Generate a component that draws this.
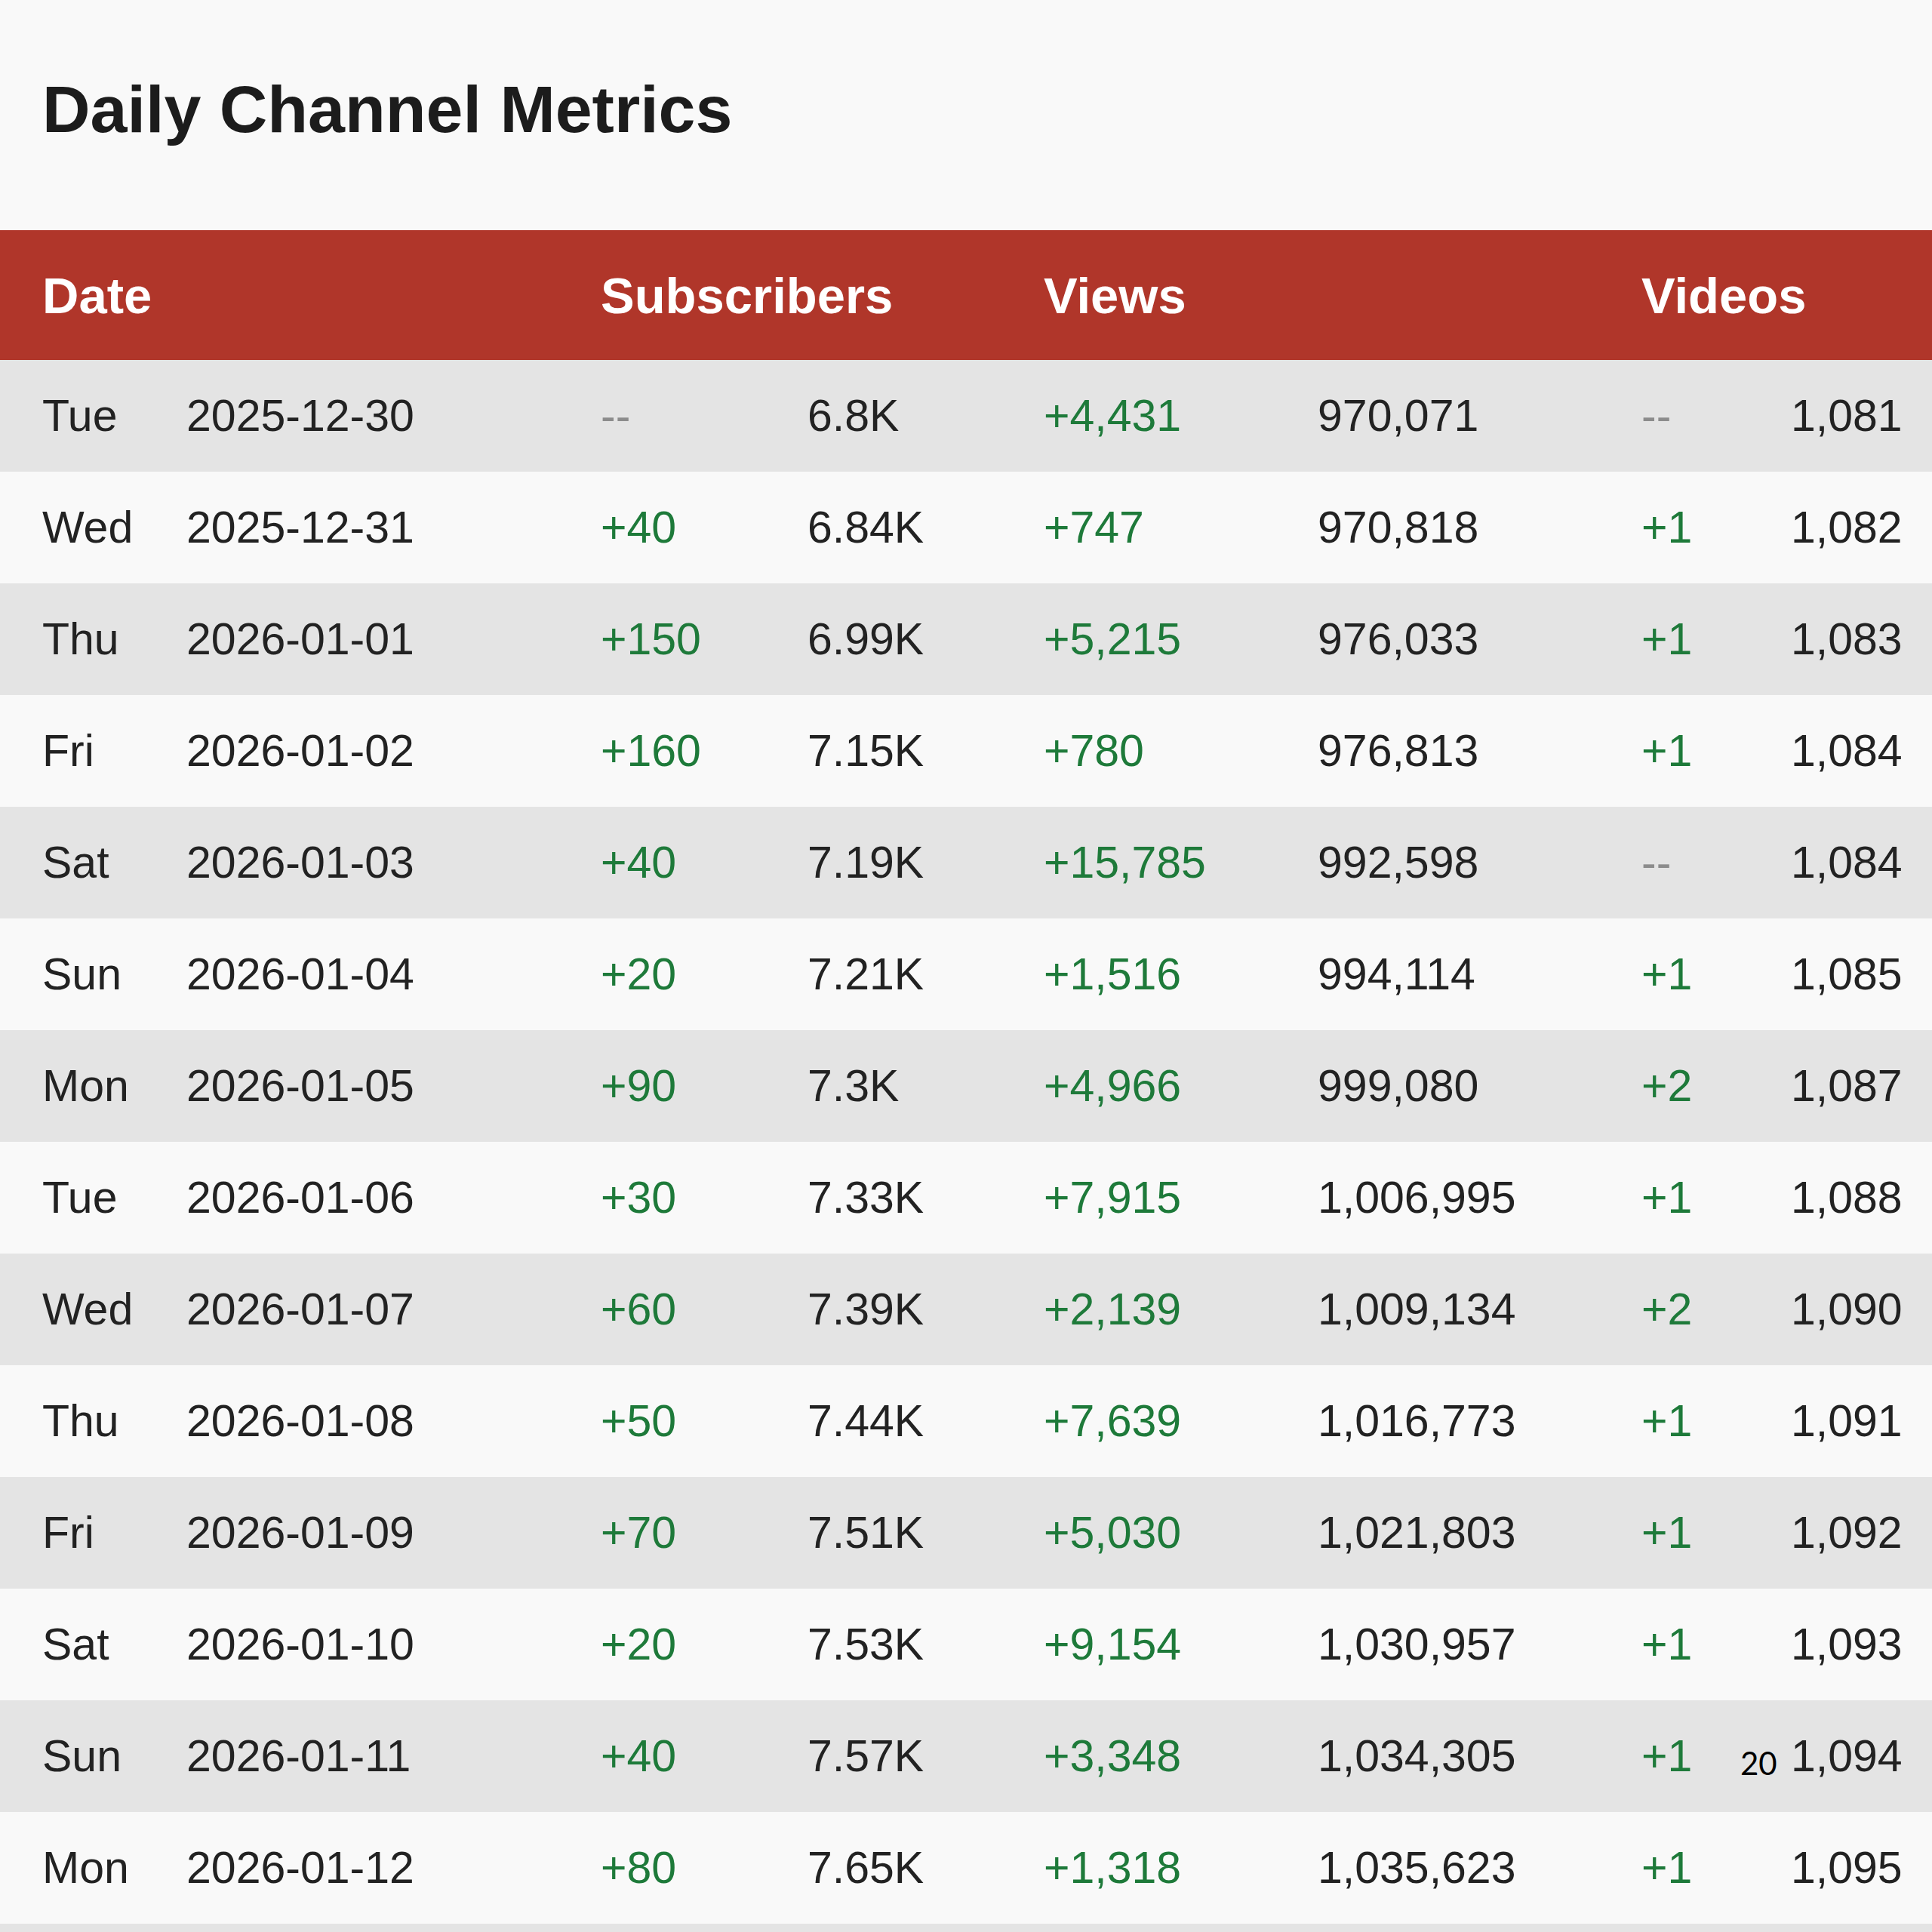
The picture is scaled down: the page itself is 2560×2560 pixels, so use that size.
import * as React from 'react'

type Row = [string, string, string, string, string, string, string, string]

const rows: Row[] = [
  ['Tue', '2025-12-30', '--', '6.8K', '+4,431', '970,071', '--', '1,081'],
  ['Wed', '2025-12-31', '+40', '6.84K', '+747', '970,818', '+1', '1,082'],
  ['Thu', '2026-01-01', '+150', '6.99K', '+5,215', '976,033', '+1', '1,083'],
  ['Fri', '2026-01-02', '+160', '7.15K', '+780', '976,813', '+1', '1,084'],
  ['Sat', '2026-01-03', '+40', '7.19K', '+15,785', '992,598', '--', '1,084'],
  ['Sun', '2026-01-04', '+20', '7.21K', '+1,516', '994,114', '+1', '1,085'],
  ['Mon', '2026-01-05', '+90', '7.3K', '+4,966', '999,080', '+2', '1,087'],
  ['Tue', '2026-01-06', '+30', '7.33K', '+7,915', '1,006,995', '+1', '1,088'],
  ['Wed', '2026-01-07', '+60', '7.39K', '+2,139', '1,009,134', '+2', '1,090'],
  ['Thu', '2026-01-08', '+50', '7.44K', '+7,639', '1,016,773', '+1', '1,091'],
  ['Fri', '2026-01-09', '+70', '7.51K', '+5,030', '1,021,803', '+1', '1,092'],
  ['Sat', '2026-01-10', '+20', '7.53K', '+9,154', '1,030,957', '+1', '1,093'],
  ['Sun', '2026-01-11', '+40', '7.57K', '+3,348', '1,034,305', '+1', '1,094'],
  ['Mon', '2026-01-12', '+80', '7.65K', '+1,318', '1,035,623', '+1', '1,095'],
]

// shared column template so header and body line up
const cols = 'grid grid-cols-[191px_549px_274px_313px_363px_429px_198px_1fr] pl-[56px]'

function Cell({ value }: { value: string }) {
  // deltas are green, missing values are a muted dash
  let color = 'text-[#222222]'
  if (value.startsWith('+')) color = 'text-[#1e7a3a]'
  if (value === '--') color = 'text-[#8c8c8c]'
  return <div className={`whitespace-nowrap ${color}`}>{value}</div>
}

export default function App() {
  return (
    <div className="relative w-[2560px] h-[2560px] overflow-hidden bg-[#f9f9f9] font-['Liberation_Sans',Arial,sans-serif]">
      <h1 className="pt-[101px] pl-[56px] text-[88px] font-bold leading-none text-[#1c1c1c]">
        Daily Channel Metrics
      </h1>

      <div className="mt-[116px]">
        <div className={`${cols} h-[172px] items-center bg-[#b0362a] text-[67px] font-bold leading-none text-white`}>
          <div className="col-span-2">Date</div>
          <div className="col-span-2">Subscribers</div>
          <div className="col-span-2">Views</div>
          <div className="col-span-2">Videos</div>
        </div>

        {rows.map((row, i) => (
          <div
            key={i}
            className={`${cols} h-[148px] items-center text-[59px] leading-none ${i % 2 === 0 ? 'bg-[#e4e4e4]' : 'bg-[#f9f9f9]'}`}
          >
            {row.map((v, j) => (
              <Cell key={j} value={v} />
            ))}
          </div>
        ))}

        <div className="h-[148px] bg-[#e4e4e4]" />
      </div>

      {/* page number stamped over the table */}
      <div className="absolute left-[2306px] top-[2315px] font-['Lato',sans-serif] text-[42px] leading-none text-black">
        20
      </div>
    </div>
  )
}
